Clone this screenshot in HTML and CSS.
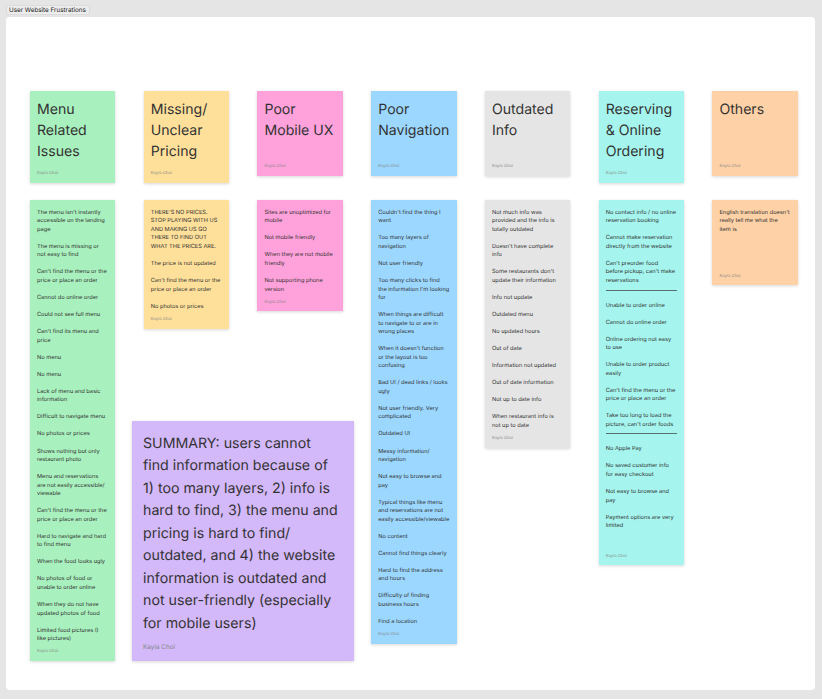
FILE: index.html
```html
<!DOCTYPE html>
<html lang="en">
<head>
<meta charset="utf-8">
<title>User Website Frustrations</title>
<link rel="stylesheet" href="styles.css">
</head>
<body>
<div class="tab">User Website Frustrations</div>
<main class="board">
  <div class="columns">
    <section class="col">
      <div class="note head green"><h2>Menu Related Issues</h2><span class="author">Kayla Choi</span></div>
      <div class="note body green">
        <p>The menu isn't instantly accessible on the landing page</p>
        <p>The menu is missing or not easy to find</p>
        <p>Can't find the menu or the price or place an order</p>
        <p>Cannot do online order</p>
        <p>Could not see full menu</p>
        <p>Can't find its menu and price</p>
        <p>No menu</p>
        <p>No menu</p>
        <p>Lack of menu and basic information</p>
        <p>Difficult to navigate menu</p>
        <p>No photos or prices</p>
        <p>Shows nothing but only restaurant photo</p>
        <p>Menu and reservations are not easily accessible/ viewable</p>
        <p>Can't find the menu or the price or place an order</p>
        <p>Hard to navigate and hard to find menu</p>
        <p>When the food looks ugly</p>
        <p>No photos of food or unable to order online</p>
        <p>When they do not have updated photos of food</p>
        <p>Limited food pictures (I like pictures)</p>
        <span class="author">Kayla Choi</span>
      </div>
    </section>
    <section class="col">
      <div class="note head yellow"><h2>Missing/ Unclear Pricing</h2><span class="author">Kayla Choi</span></div>
      <div class="note body yellow">
        <p>THERE'S NO PRICES. STOP PLAYING WITH US AND MAKING US GO THERE TO FIND OUT WHAT THE PRICES ARE.</p>
        <p>The price is not updated</p>
        <p>Can't find the menu or the price or place an order</p>
        <p>No photos or prices</p>
        <span class="author">Kayla Choi</span>
      </div>
    </section>
    <section class="col">
      <div class="note head pink"><h2>Poor Mobile UX</h2><span class="author">Kayla Choi</span></div>
      <div class="note body pink">
        <p>Sites are unoptimized for mobile</p>
        <p>Not mobile friendly</p>
        <p>When they are not mobile friendly</p>
        <p>Not supporting phone version</p>
        <span class="author">Kayla Choi</span>
      </div>
    </section>
    <section class="col">
      <div class="note head blue"><h2>Poor Navigation</h2><span class="author">Kayla Choi</span></div>
      <div class="note body blue">
        <p>Couldn't find the thing I want</p>
        <p>Too many layers of navigation</p>
        <p>Not user friendly</p>
        <p>Too many clicks to find the information I'm looking for</p>
        <p>When things are difficult to navigate to or are in wrong places</p>
        <p>When it doesn't function or the layout is too confusing</p>
        <p>Bad UI / dead links / looks ugly</p>
        <p>Not user friendly. Very complicated</p>
        <p>Outdated UI</p>
        <p>Messy information/ navigation</p>
        <p>Not easy to browse and pay</p>
        <p>Typical things like menu and reservations are not easily accessible/viewable</p>
        <p>No content</p>
        <p>Cannot find things clearly</p>
        <p>Hard to find the address and hours</p>
        <p>Difficulty of finding business hours</p>
        <p>Find a location</p>
        <span class="author">Kayla Choi</span>
      </div>
    </section>
    <section class="col">
      <div class="note head gray"><h2>Outdated Info</h2><span class="author">Kayla Choi</span></div>
      <div class="note body gray">
        <p>Not much info was provided and the info is totally outdated</p>
        <p>Doesn't have complete info</p>
        <p>Some restaurants don't update their information</p>
        <p>Info not update</p>
        <p>Outdated menu</p>
        <p>No updated hours</p>
        <p>Out of date</p>
        <p>Information not updated</p>
        <p>Out of date information</p>
        <p>Not up to date info</p>
        <p>When restaurant info is not up to date</p>
        <span class="author">Kayla Choi</span>
      </div>
    </section>
    <section class="col">
      <div class="note head teal"><h2>Reserving &amp; Online Ordering</h2><span class="author">Kayla Choi</span></div>
      <div class="note body teal">
        <p>No contact info / no online reservation booking</p>
        <p>Cannot make reservation directly from the website</p>
        <p>Can't preorder food before pickup, can't make reservations</p>
        <hr>
        <p>Unable to order online</p>
        <p>Cannot do online order</p>
        <p>Online ordering not easy to use</p>
        <p>Unable to order product easily</p>
        <p>Can't find the menu or the price or place an order</p>
        <p>Take too long to load the picture, can't order foods</p>
        <hr>
        <p>No Apple Pay</p>
        <p>No saved customer info for easy checkout</p>
        <p>Not easy to browse and pay</p>
        <p class="spaced">Payment options are very limited</p>
        <span class="author">Kayla Choi</span>
      </div>
    </section>
    <section class="col">
      <div class="note head orange"><h2>Others</h2><span class="author">Kayla Choi</span></div>
      <div class="note body orange square">
        <p>English translation doesn't really tell me what the item is</p>
        <span class="author">Kayla Choi</span>
      </div>
    </section>
  </div>
  <div class="note summary">
    <h2>SUMMARY: users cannot<br>find information because of 1) too many layers, 2) info is hard to find, 3) the menu and pricing is hard to find/ outdated, and 4) the website information is outdated and not user-friendly (especially for mobile users)</h2>
    <span class="author">Kayla Choi</span>
  </div>
</main>
</body>
</html>
```
FILE: styles.css
```css
* { box-sizing: border-box; }
html, body { height: 100%; }
body {
  margin: 0;
  background: #e5e5e5;
  font-family: Inter, "Liberation Sans", sans-serif;
  color: #333;
  overflow: hidden;
  text-rendering: geometricPrecision;
}
.tab {
  width: 84px;
  height: 10px;
  margin: 5px 0 2px 6px;
  padding: 0 2px;
  border-radius: 2px;
  background: #ececec;
  border: 0.5px solid #dcdcdc;
  font-size: 6.3px;
  line-height: 9px;
  white-space: nowrap;
  color: #222;
}
.board {
  position: relative;
  width: 809px;
  height: 673px;
  margin-left: 6px;
  padding: 74px 0 0 24px;
  background: #fff;
  border-radius: 4px;
}
.columns {
  display: flex;
  align-items: flex-start;
  gap: 28.45px;
}
.col {
  width: 85.3px;
  display: grid;
  grid-template-rows: 109px auto;
}
.note {
  display: flex;
  flex-direction: column;
  box-shadow: 0 1px 3px rgba(0, 0, 0, 0.16);
}
.head {
  align-self: start;
  min-height: 85.3px;
  padding: 7.7px 7px 6px;
}
.head h2 {
  margin: 0 0 auto;
  padding-bottom: 8px;
  font-size: 14.1px;
  line-height: 21.33px;
  font-weight: 400;
  color: #333;
}
.body {
  padding: 8.8px 7.1px 5.6px 7px;
}
.body p {
  margin: 0 0 8.53px;
  font-size: 5.65px;
  line-height: 8.53px;
  color: #333;
}
.body p:last-of-type { margin-bottom: 0; }
.body p.spaced { margin-bottom: 17px; }
.body hr {
  width: 100%;
  height: 0.7px;
  margin: -4.5px 0 11.3px;
  border: 0;
  background: #55706e;
}
.square { min-height: 85.3px; }
.author {
  display: block;
  margin-top: 5.8px;
  font-size: 4.2px;
  line-height: 6px;
  color: #888;
}
.head .author, .square .author { margin-top: auto; }
.square p:last-of-type { margin-bottom: 5px; }
.green { background: #a8f0bd; }
.yellow { background: #ffe09a; }
.pink { background: #ffa1da; }
.blue { background: #9bd7ff; }
.gray { background: #e5e5e5; }
.teal { background: #a5f5ee; }
.orange { background: #ffd1a6; }
.summary {
  position: absolute;
  left: 126px;
  top: 404px;
  width: 222px;
  height: 240px;
  padding: 12px 13px 9px 11px;
  background: #d3b8fa;
}
.summary h2 {
  margin: 0 0 auto;
  font-size: 14.2px;
  line-height: 22.45px;
  font-weight: 400;
  color: #333;
}
.summary .author {
  font-size: 6.4px;
  line-height: 9px;
}
```
